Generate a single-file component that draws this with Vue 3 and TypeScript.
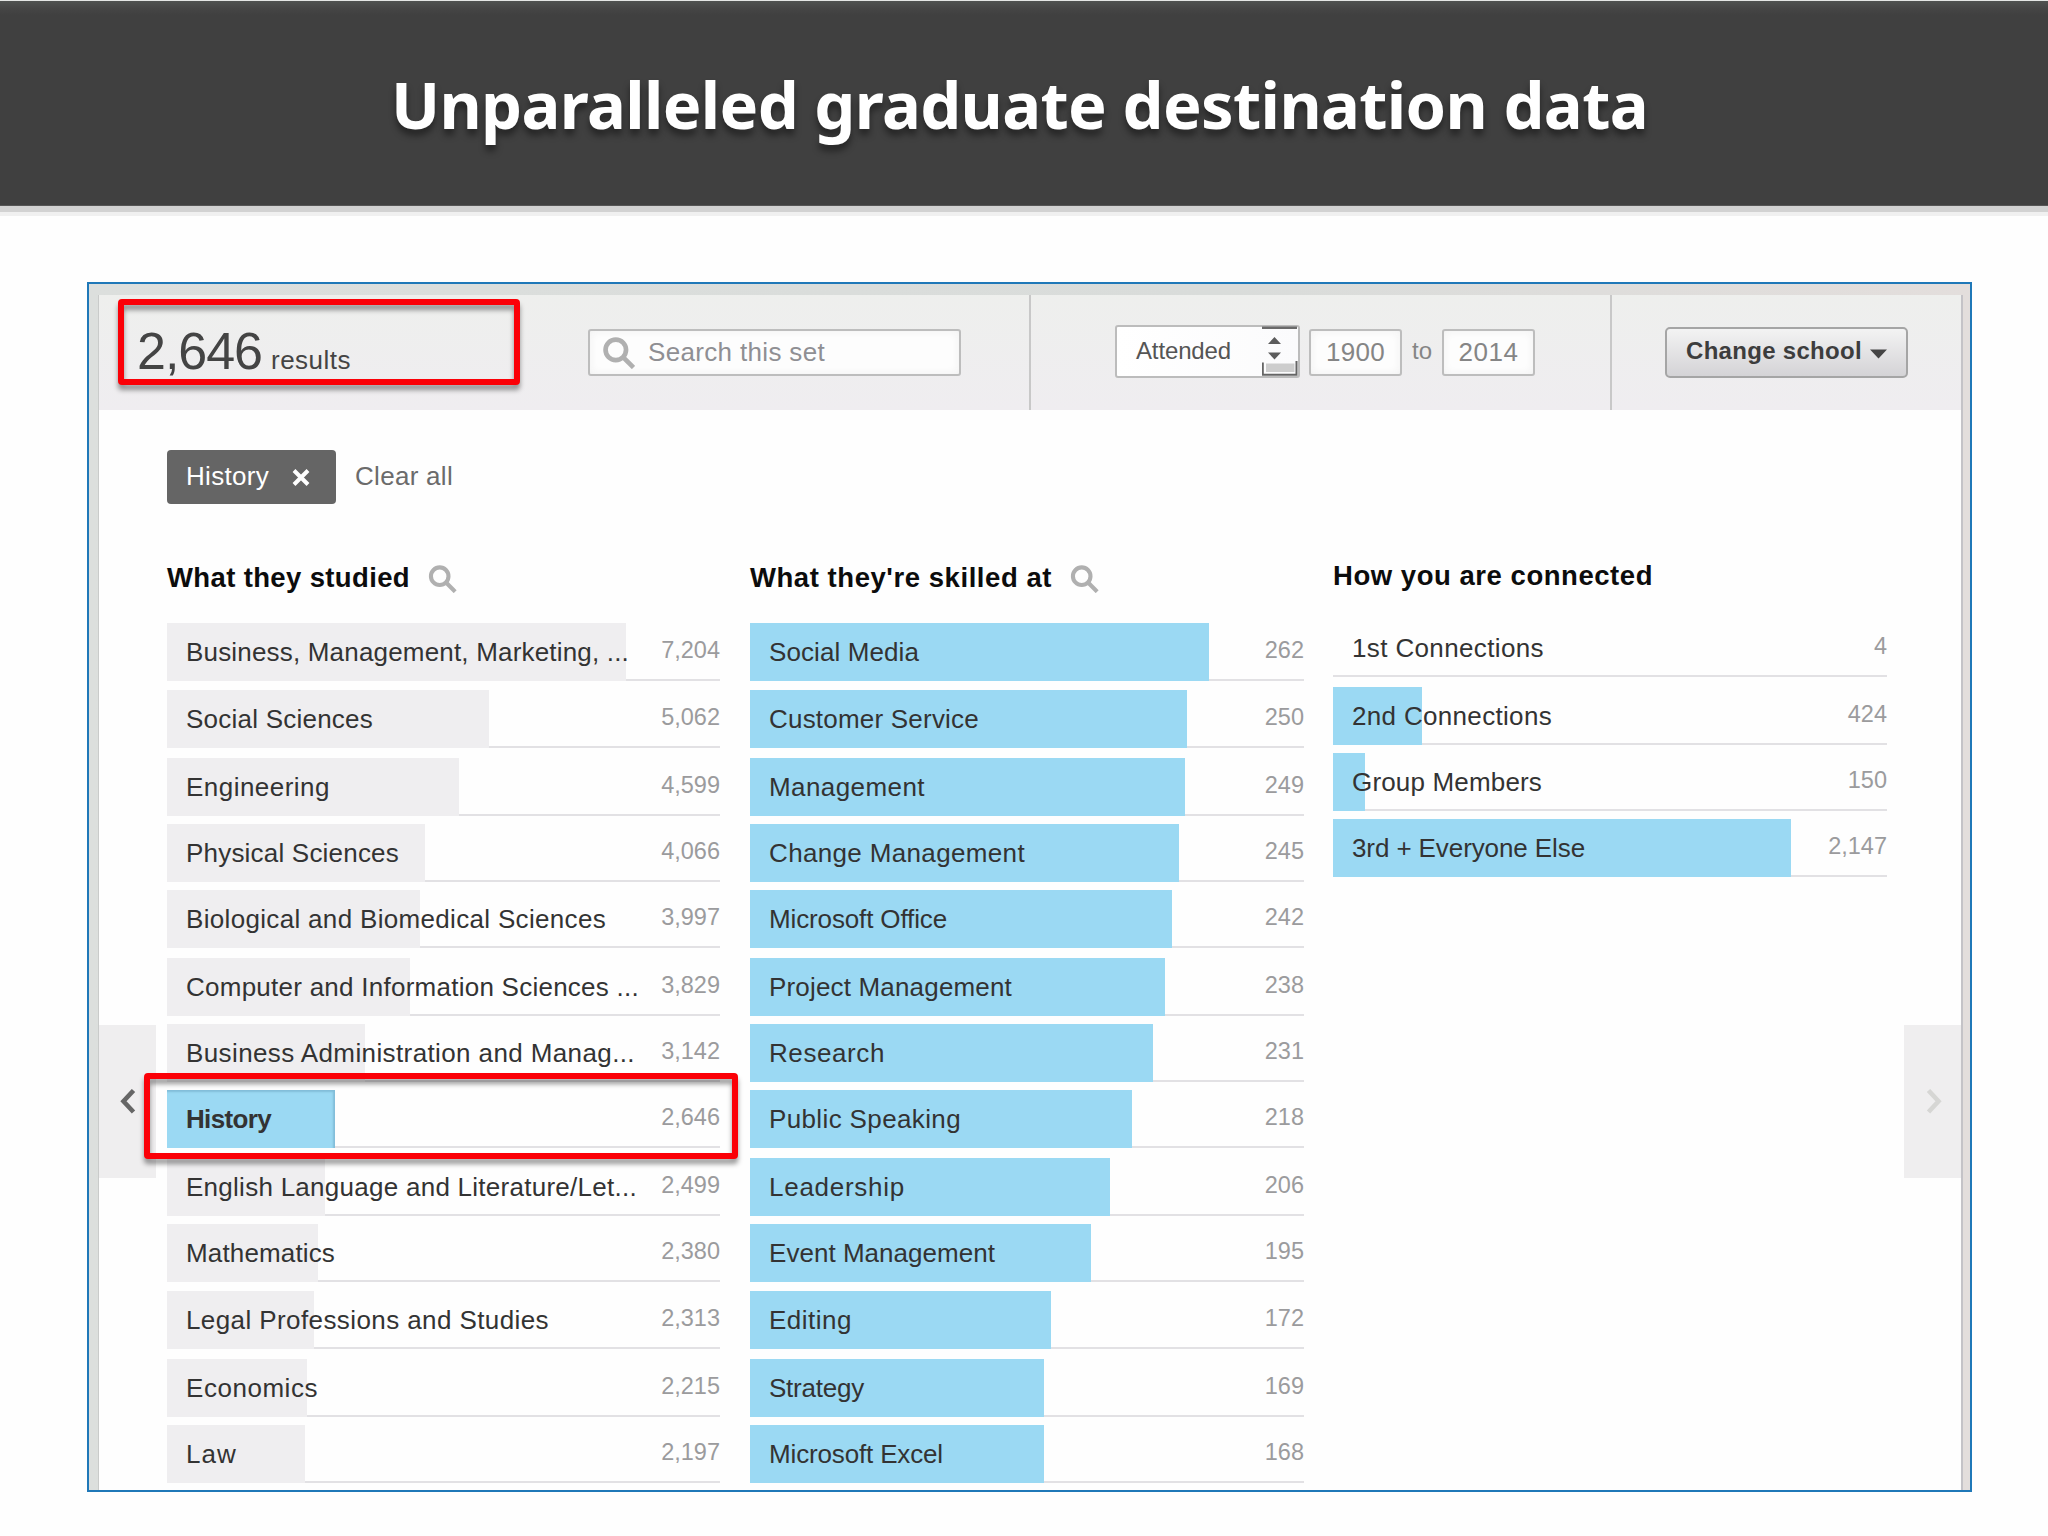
<script setup lang="ts">
import type { Directive } from 'vue'

interface Row {
  label: string
  count: string
  bar: number
  width: number
  active?: boolean
}

interface Column {
  title: string
  titleWidth: number
  searchable: boolean
  tone: 'grey' | 'blue'
  rows: Row[]
}

// Tracks a line of text out (or in) to the given advance width.
const vFit: Directive<HTMLElement, number> = {
  mounted(el, binding) {
    const length = (el.textContent ?? '').length
    const natural = el.getBoundingClientRect().width
    el.style.letterSpacing = `${(binding.value - natural) / length}px`
  },
}

const row = (label: string, count: string, bar: number, width: number, active = false): Row => ({
  label,
  count,
  bar,
  width,
  active,
})

const columns: Column[] = [
  {
    title: 'What they studied',
    titleWidth: 243,
    searchable: true,
    tone: 'grey',
    rows: [
      row('Business, Management, Marketing, ...', '7,204', 459, 443),
      row('Social Sciences', '5,062', 322, 187),
      row('Engineering', '4,599', 292, 144),
      row('Physical Sciences', '4,066', 258, 213),
      row('Biological and Biomedical Sciences', '3,997', 253, 420),
      row('Computer and Information Sciences ...', '3,829', 243, 453),
      row('Business Administration and Manag...', '3,142', 198, 449),
      row('History', '2,646', 168, 85, true),
      row('English Language and Literature/Let...', '2,499', 158, 451),
      row('Mathematics', '2,380', 151, 149),
      row('Legal Professions and Studies', '2,313', 147, 363),
      row('Economics', '2,215', 140, 132),
      row('Law', '2,197', 138, 51),
    ],
  },
  {
    title: "What they're skilled at",
    titleWidth: 302,
    searchable: true,
    tone: 'blue',
    rows: [
      row('Social Media', '262', 459, 150),
      row('Customer Service', '250', 437, 210),
      row('Management', '249', 435, 156),
      row('Change Management', '245', 429, 256),
      row('Microsoft Office', '242', 422, 178),
      row('Project Management', '238', 415, 243),
      row('Research', '231', 403, 116),
      row('Public Speaking', '218', 382, 192),
      row('Leadership', '206', 360, 136),
      row('Event Management', '195', 341, 226),
      row('Editing', '172', 301, 83),
      row('Strategy', '169', 294, 95),
      row('Microsoft Excel', '168', 294, 174),
    ],
  },
  {
    title: 'How you are connected',
    titleWidth: 320,
    searchable: false,
    tone: 'blue',
    rows: [
      row('1st Connections', '4', 0, 192),
      row('2nd Connections', '424', 89, 200),
      row('Group Members', '150', 32, 190),
      row('3rd + Everyone Else', '2,147', 458, 233),
    ],
  },
]
</script>

<template>
  <div class="slide">
    <header class="banner">
      <h1 v-fit="1257" class="banner-title">Unparalleled graduate destination data</h1>
    </header>

    <main class="frame">
      <div class="app">
        <div class="toolbar">
          <section class="tool results-tool">
            <div class="results">
              <span v-fit="125" class="total">2,646</span>
              <span v-fit="80" class="total-label">results</span>
            </div>
            <div class="search">
              <svg class="lens lens-lg" viewBox="0 0 30 30">
                <circle cx="12" cy="12" r="9.6" />
                <path d="M18.8 18.8 L28.6 28.6" />
              </svg>
              <span v-fit="177">Search this set</span>
            </div>
          </section>
          <section class="tool years-tool">
            <div class="select">
              <span v-fit="95">Attended</span>
              <svg class="stepper" width="37" height="52" viewBox="0 0 37 52">
                <rect x="0" y="1.5" width="35" height="2.5" fill="#6a6a6a" />
                <path d="M6 19 L12.5 12 L19 19 Z M6 27.5 L12.5 34.5 L19 27.5 Z" fill="#5c5c5c" />
                <path d="M0.8 37.5 V49.7 H34.5 V36" fill="none" stroke="#656565" stroke-width="2" />
                <rect x="4" y="38.5" width="28.5" height="8.5" fill="#cdcdcd" />
              </svg>
            </div>
            <div class="year"><span v-fit="59">1900</span></div>
            <span class="to">to</span>
            <div class="year"><span v-fit="60">2014</span></div>
          </section>
          <section class="tool school-tool">
            <button class="change" type="button">
              <span v-fit="176">Change school</span>
              <svg width="17" height="10" viewBox="0 0 17 10"><path d="M0 0.5 H17 L8.5 9.5 Z" fill="#444" /></svg>
            </button>
          </section>
        </div>

        <div class="filters">
          <div class="chip">
            <span v-fit="83">History</span>
            <svg width="18" height="17" viewBox="0 0 18 17">
              <path d="M2 1.5 L16 15.5 M16 1.5 L2 15.5" stroke="#fff" stroke-width="4" />
            </svg>
          </div>
          <span v-fit="98" class="clear">Clear all</span>
        </div>

        <div class="columns">
          <section v-for="col in columns" :key="col.title" class="column" :class="[col.tone, { plain: !col.searchable }]">
            <h2 class="heading">
              <span v-fit="col.titleWidth">{{ col.title }}</span>
              <svg v-if="col.searchable" class="lens" viewBox="0 0 30 30">
                <circle cx="12" cy="12" r="9.4" />
                <path d="M18.8 18.8 L28.6 28.6" />
              </svg>
            </h2>
            <ul class="rows">
              <li v-for="r in col.rows" :key="r.label" class="row" :class="{ active: r.active }">
                <span class="bar" :style="{ width: r.bar + 'px' }"></span>
                <span class="label"><span v-fit="r.width">{{ r.label }}</span></span>
                <span class="count">{{ r.count }}</span>
              </li>
            </ul>
          </section>
        </div>

        <div class="pager prev">
          <svg width="17" height="25" viewBox="0 0 17 25"><path d="M14.5 1.5 L4.5 12.3 L14.5 23" fill="none" stroke="#666" stroke-width="4.6" /></svg>
        </div>
        <div class="pager next">
          <svg width="17" height="25" viewBox="0 0 17 25"><path d="M2.5 1.5 L12.5 12.3 L2.5 23" fill="none" stroke="#d6d6d4" stroke-width="4.6" /></svg>
        </div>
      </div>
      <div class="callout callout-total"></div>
      <div class="callout callout-row"></div>
    </main>
  </div>
</template>

<style>
body {
  margin: 0;
  background: #fefefe;
}
</style>

<style scoped>
.slide {
  width: 2048px;
  height: 1536px;
  overflow: hidden;
  background: #fefefe;
  font-family: 'Liberation Sans', Arial, sans-serif;
}
.slide * {
  box-sizing: border-box;
}
.slide span,
.banner-title {
  display: inline-block;
  white-space: nowrap;
}
.banner {
  height: 206px;
  padding-left: 391px;
  border-top: 1px solid #e4e6e5;
  border-bottom: 1px solid #565656;
  background: linear-gradient(#505251 0, #464646 7px, #404040 14px);
  box-shadow: 0 6px 0 #d2d2d2, 0 10px 0 #f0f0f0;
}
.banner-title {
  margin: 0;
  font: 700 65px/206px 'Noto Sans', 'Open Sans', sans-serif;
  color: #fff;
  text-shadow: 0 6px 7px rgba(0, 0, 0, 0.45);
}
.frame {
  position: relative;
  width: 1885px;
  height: 1210px;
  margin: 76px 0 0 87px;
  padding: 11px 7px 0 9px;
  border: 2px solid #1f78b8;
  background: linear-gradient(90deg, #dcdfdd, #d9dcda 60%, #e3dedc);
}
.app {
  position: relative;
  height: 100%;
  border-left: 1px solid #c9cbca;
  border-right: 2px solid #c4c3c7;
  background: #fefefe;
}
.toolbar {
  display: flex;
  height: 115px;
  background: linear-gradient(#eeefed, #efedf0);
}
.tool {
  display: flex;
  align-items: center;
}
.tool + .tool {
  border-left: 2px solid #c8c8c8;
}
.results-tool {
  width: 930px;
  padding-left: 38px;
}
.results {
  display: flex;
  align-items: baseline;
  gap: 9px;
  width: 451px;
  padding-top: 6px;
  line-height: 83px;
  color: #444;
}
.total {
  font-size: 52px;
}
.total-label {
  font-size: 26px;
}
.search {
  display: flex;
  align-items: center;
  width: 373px;
  height: 47px;
  padding-left: 13px;
  gap: 13px;
  border: 2px solid #bdbdbd;
  border-radius: 3px;
  background: #fdfdfd;
  box-shadow: inset 0 0 8px #f0f0f0;
  color: #8f8f93;
  font-size: 26px;
}
.lens {
  width: 29px;
  height: 28px;
  fill: none;
  stroke: #b0b0b0;
  stroke-width: 4.4;
}
.lens-lg {
  width: 32px;
  height: 32px;
}
.years-tool {
  width: 581px;
  padding-left: 84px;
  font-size: 26px;
  color: #858585;
}
.select {
  display: flex;
  align-items: center;
  justify-content: space-between;
  width: 185px;
  height: 53px;
  margin-right: 9px;
  margin-bottom: 3px;
  padding-left: 19px;
  border: 2px solid #bcbcbc;
  border-radius: 3px;
  background: linear-gradient(90deg, #fff, #fbfbfc);
  font-size: 24px;
  color: #555;
}
.stepper {
  flex: none;
  margin-right: -1px;
}
.year {
  display: flex;
  align-items: center;
  justify-content: center;
  width: 93px;
  height: 47px;
  border: 2px solid #bdbdbd;
  border-radius: 3px;
  background: #fdfdfd;
  box-shadow: inset 0 0 8px #f0f0f0;
}
.to {
  width: 40px;
  padding-bottom: 3px;
  text-align: center;
  font-size: 24px;
}
.school-tool {
  padding-left: 53px;
}
.change {
  display: flex;
  align-items: center;
  width: 243px;
  height: 51px;
  padding: 0 0 3px 19px;
  gap: 8px;
  border: 2px solid #a5a5a5;
  border-radius: 5px;
  background: linear-gradient(#f3f3f3, #d4d3d6);
  font: 700 24px 'Liberation Sans', Arial, sans-serif;
  color: #3d3d3d;
}
.change svg {
  margin-top: 6px;
}
.filters {
  display: flex;
  align-items: center;
  height: 54px;
  margin: 40px 0 50px 68px;
  font-size: 26px;
  color: #6b6b6b;
}
.chip {
  display: flex;
  align-items: center;
  width: 169px;
  height: 54px;
  margin-right: 19px;
  padding: 0 0 2px 19px;
  border-radius: 4px;
  background: #656565;
  color: #fff;
}
.chip svg {
  margin: 3px 0 0 23px;
}
.clear {
  padding-bottom: 2px;
}
.columns {
  display: flex;
  gap: 29px;
  padding-left: 68px;
}
.column {
  width: 554px;
}
.grey .rows {
  width: 553px;
}
.heading {
  display: flex;
  align-items: center;
  gap: 18px;
  height: 46px;
  margin: 0 0 23px;
  font-size: 27.5px;
  font-weight: 700;
  color: #0c0c0c;
}
.heading > span {
  padding-top: 1px;
}
.heading .lens {
  margin-top: 4px;
}
.plain .heading {
  height: 42px;
}
.rows {
  margin: 0;
  padding: 0;
  list-style: none;
}
.row {
  display: grid;
  grid-template-columns: 1fr auto;
  height: 58px;
  margin-bottom: 8px;
  box-shadow: inset 0 -2px 0 #e2e1e4;
}
.row:nth-child(1),
.row:nth-child(10) {
  margin-bottom: 9px;
}
.row:nth-child(2),
.row:nth-child(8),
.row:nth-child(11) {
  margin-bottom: 10px;
}
.row:nth-child(5) {
  margin-bottom: 10px;
}
.plain .row:nth-child(1) {
  margin-bottom: 10px;
}
.plain .row:nth-child(2) {
  margin-bottom: 8px;
}
.bar {
  grid-area: 1 / 1 / 2 / 3;
  height: 58px;
  background: #efeef0;
}
.blue .bar {
  background: #9bd9f3;
}
.active .bar {
  background: #9bd9f3;
  box-shadow: inset -2px 2px 2px #82bdd8;
}
.label {
  grid-area: 1 / 1;
  padding-left: 19px;
  font-size: 26px;
  line-height: 58px;
  color: #333;
}
.active .label {
  font-weight: 700;
}
.count {
  grid-area: 1 / 2;
  font-size: 23.5px;
  line-height: 54px;
  color: #9b9b9d;
}
.pager {
  position: absolute;
  top: 730px;
  display: flex;
  align-items: center;
  height: 153px;
  background: #efeeef;
}
.prev {
  left: 0;
  width: 57px;
  padding-left: 20px;
}
.next {
  right: 0;
  width: 57px;
  padding-left: 22px;
}
.callout {
  position: absolute;
  border: 6.5px solid #fb0007;
  border-radius: 4px;
  filter: drop-shadow(0 5px 2.5px rgba(0, 0, 0, 0.4));
}
.callout-total {
  left: 29px;
  top: 15px;
  width: 402px;
  height: 86px;
}
.callout-row {
  left: 55px;
  top: 789px;
  width: 594px;
  height: 86px;
}
</style>
